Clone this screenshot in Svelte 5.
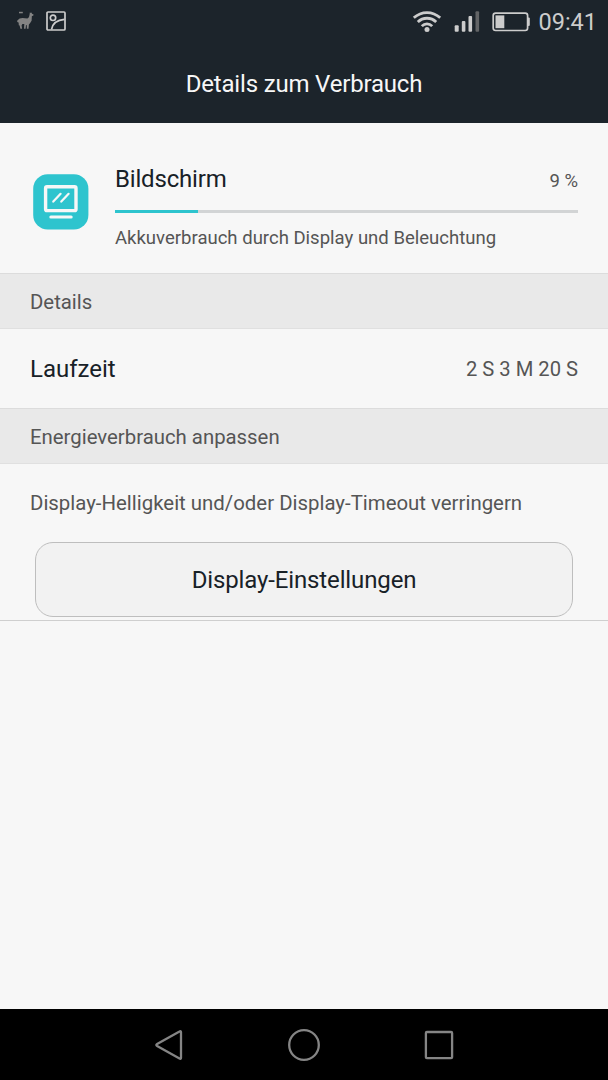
<script>

let time = '09:41';

let usage = {
  name: 'Bildschirm',
  percent: '9 %',
  bar: 18,
  description: 'Akkuverbrauch durch Display und Beleuchtung'
};

let details = [
  { label: 'Laufzeit', value: '2 S 3 M 20 S' }
];

</script>

<div class="screen">
  <div class="status-bar">
    <div class="notifications">
      <svg class="llama" width="18" height="20" viewBox="0 0 18 20">
        <path d="M13.9 1.2L14.8 2L15.6 1.6L16 2.8L17.6 3.4L17.2 4.8L15.9 5L15.6 9.8L14 12.2L12.9 13.5L12.5 17.8H10.9L10.8 14.2L10 14L9.6 17.8H8L8.3 13L6.4 13L5.6 14.5L6.1 17.8H4.4L3.6 14.5L2.8 14.2L2.6 11.5L1.2 11L1.3 9.4L3.6 7.6L6.5 6.9L11.4 7.5L12.9 6.2L13.5 4Z"></path>
        <path d="M3 0.8H6.8V2.3H3Z"></path>
      </svg>
      <svg width="20" height="20" viewBox="0 0 20 20">
        <rect x="1" y="1" width="18" height="18" rx="1"></rect>
        <circle cx="7" cy="6.8" r="2.7"></circle>
        <path d="M5.5 18.5C6.5 12.5 11.5 9 18.5 8.4"></path>
      </svg>
    </div>
    <div class="system">
      <svg class="wifi" width="30" height="24" viewBox="0 0 30 24">
        <path d="M1.8 7.8C9.5 0.8 20.5 0.8 28.2 7.8"></path>
        <path d="M5.8 12C11 7 19 7 24.2 12"></path>
        <path d="M9.8 16.1C12.8 13 17.2 13 20.2 16.1"></path>
        <circle cx="15" cy="19.4" r="2.5"></circle>
      </svg>
      <svg class="signal" width="26" height="22" viewBox="0 0 26 22">
        <rect x="0.7" y="14.2" width="4" height="6.5" rx="1"></rect>
        <rect x="7.8" y="10" width="3.6" height="10.7" rx="1"></rect>
        <rect x="14.5" y="5" width="3.6" height="15.7" rx="1"></rect>
        <rect class="dim" x="21.5" y="0.2" width="3.6" height="20.5" rx="1"></rect>
      </svg>
      <svg class="battery" width="38" height="20" viewBox="0 0 38 20">
        <rect class="shell" x="1.2" y="1.1" width="34.4" height="17.4" rx="2.4"></rect>
        <rect x="3.5" y="3.4" width="8.8" height="12.8"></rect>
        <rect x="35.5" y="5.5" width="2.3" height="8.6" rx="1"></rect>
      </svg>
      <span class="time">{time}</span>
    </div>
  </div>

  <header><h1>Details zum Verbrauch</h1></header>

  <main>
    <div class="summary">
      <svg class="app-icon" width="56" height="56" viewBox="0 0 56 56">
        <rect class="tile" x="0.2" y="0.2" width="55.2" height="55.2" rx="14.5"></rect>
        <rect class="monitor" x="12.6" y="12.8" width="30.4" height="23.8" rx="1.4"></rect>
        <path d="M20.3 27.6L27.6 19.8M28.3 27.6L35.6 19.8"></path>
        <path class="stand" d="M17.8 43.1H38.2"></path>
      </svg>
      <div class="usage">
        <div class="usage-head">
          <span class="name">{usage.name}</span>
          <span class="percent">{usage.percent}</span>
        </div>
        <div class="bar"><div class="fill" style="width: {usage.bar}%"></div></div>
        <p>{usage.description}</p>
      </div>
    </div>

    <h2>Details</h2>
    {#each details as row}
      <div class="row">
        <span class="label">{row.label}</span>
        <span class="value">{row.value}</span>
      </div>
    {/each}

    <h2>Energieverbrauch anpassen</h2>
    <div class="adjust">
      <p>Display-Helligkeit und/oder Display-Timeout verringern</p>
      <button>Display-Einstellungen</button>
    </div>
  </main>

  <nav>
    <svg width="36" height="36" viewBox="0 0 36 36">
      <path d="M30 5.2V30.8Q30 32.5 28.5 31.6L6.1 19Q4.5 18 6.1 17L28.5 4.4Q30 3.5 30 5.2Z"></path>
    </svg>
    <svg width="36" height="36" viewBox="0 0 36 36">
      <circle cx="18" cy="18" r="14.8"></circle>
    </svg>
    <svg width="36" height="36" viewBox="0 0 36 36">
      <rect x="4.9" y="5" width="26.2" height="26.2" rx="1"></rect>
    </svg>
  </nav>
</div>

<style>
  :global(body) {
    background: #f7f7f7;
  }

  .screen {
    display: flex;
    flex-direction: column;
    height: 1080px;
    font-family: Roboto, "Liberation Sans", sans-serif;
    color: #182127;
  }

  h1, h2, p {
    margin: 0;
    font-weight: 400;
  }

  svg {
    display: block;
    flex: none;
  }

  .status-bar {
    display: flex;
    justify-content: space-between;
    align-items: center;
    box-sizing: border-box;
    height: 43px;
    padding: 0 11px 0 16px;
    background: #1c242b;
  }

  .notifications, .system {
    display: flex;
    align-items: center;
  }

  .notifications {
    gap: 12px;
    padding-bottom: 2px;
    fill: none;
    stroke: #ccc;
    stroke-width: 1.7;
  }

  .llama {
    fill: #838383;
    stroke: none;
  }

  .system {
    padding-top: 1px;
    fill: #ccc;
  }

  .wifi {
    margin-right: 12px;
  }

  .wifi path {
    fill: none;
    stroke: #ccc;
    stroke-width: 2.8;
  }

  .signal {
    margin-right: 12px;
  }

  .dim {
    fill: #626466;
  }

  .battery {
    margin-right: 8px;
  }

  .shell {
    fill: none;
    stroke: #ccc;
    stroke-width: 1.7;
  }

  .time {
    font-size: 23.5px;
    line-height: 43px;
    color: #ccc;
  }

  header {
    display: flex;
    justify-content: center;
    align-items: center;
    box-sizing: border-box;
    height: 80px;
    padding-top: 2px;
    background: #1c242b;
  }

  h1 {
    font-size: 24px;
    line-height: 78px;
    letter-spacing: -0.18px;
    color: #f7f7f7;
  }

  main {
    flex: 1;
  }

  .summary {
    display: flex;
    align-items: flex-start;
    gap: 26px;
    box-sizing: border-box;
    height: 150px;
    padding: 51px 30px 0 33px;
  }

  .tile {
    fill: #2ec4ce;
  }

  .app-icon path, .monitor {
    fill: none;
    stroke: #f7f7f7;
    stroke-width: 3.4;
  }

  .app-icon path {
    stroke-width: 2.2;
    stroke-linecap: round;
  }

  .app-icon .stand {
    stroke-width: 3;
  }

  .usage {
    flex: 1;
    margin-top: -12px;
  }

  .usage-head {
    display: flex;
    justify-content: space-between;
    align-items: center;
    height: 34px;
    margin-bottom: 14px;
  }

  .name, .label {
    font-size: 24px;
  }

  .name {
    letter-spacing: -0.18px;
  }

  .percent {
    padding-top: 3px;
    font-size: 18.5px;
    color: #555;
  }

  .bar {
    height: 3px;
    background: #d2d4d5;
  }

  .fill {
    height: 3px;
    background: #2ec4ce;
  }

  .usage p {
    margin-top: 11px;
    font-size: 18.55px;
    line-height: 28px;
    color: #555;
  }

  h2 {
    box-sizing: border-box;
    height: 56px;
    padding-left: 30px;
    border-top: 1px solid #dcdcdc;
    border-bottom: 1px solid #e0e0e0;
    background: #e9e9e9;
    font-size: 20.35px;
    line-height: 56px;
    color: #555;
  }

  .row {
    display: flex;
    justify-content: space-between;
    align-items: center;
    box-sizing: border-box;
    height: 79px;
    padding: 1px 30px 0;
  }

  .value {
    font-size: 20.2px;
    color: #555;
  }

  .adjust {
    box-sizing: border-box;
    height: 157px;
    padding: 24px 30px 0;
    border-bottom: 1px solid #cfcfcf;
  }

  .adjust p {
    font-size: 20.4px;
    line-height: 30px;
    color: #555;
  }

  button {
    display: block;
    box-sizing: border-box;
    width: 538px;
    height: 75px;
    margin: 24px 0 0 5px;
    padding: 1px 0 0;
    border: 1px solid #bebebe;
    border-radius: 18px;
    background: #f2f2f2;
    font-family: inherit;
    font-size: 24px;
    letter-spacing: -0.13px;
    color: #182127;
  }

  nav {
    display: flex;
    justify-content: center;
    align-items: center;
    gap: 99px;
    height: 71px;
    background: #000;
    fill: none;
    stroke: #858585;
    stroke-width: 2.3;
  }
</style>
